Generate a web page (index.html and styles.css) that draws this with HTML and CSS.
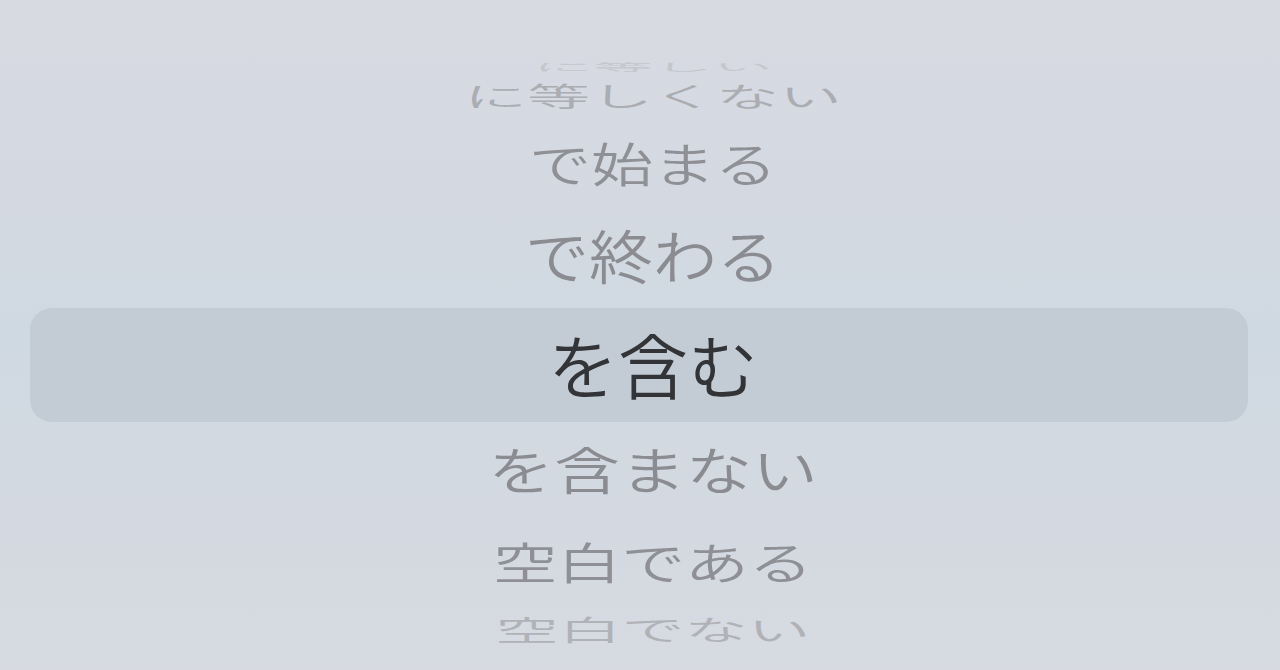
FILE: index.html
```html
<!DOCTYPE html>
<html lang="ja">
<head>
<meta charset="utf-8">
<link rel="stylesheet" href="styles.css">
</head>
<body>
<div class="picker">
  <div class="row r4"><span class="t">に等しい</span></div>
  <div class="row r3"><span class="t">に等しくない</span></div>
  <div class="row r2"><span class="t">で始まる</span></div>
  <div class="row r1"><span class="t">で終わる</span></div>
  <div class="row sel"><span class="t">を含む</span></div>
  <div class="row b1"><span class="t">を含まない</span></div>
  <div class="row b2"><span class="t">空白である</span></div>
  <div class="row b3"><span class="t">空白でない</span></div>
</div>
</body>
</html>
```

FILE: styles.css
```css
html, body {
  margin: 0;
  padding: 0;
}
body {
  width: 1280px;
  height: 670px;
  overflow: hidden;
  background: linear-gradient(to bottom, #d8dae2 0%, #d4d9e1 30%, #cfd9e2 50%, #d3d9e1 72%, #d7dae1 100%);
  font-family: "Noto Sans CJK JP", "Noto Sans", sans-serif;
  font-weight: 350;
}
.picker {
  display: flex;
  flex-direction: column;
  padding-top: 62px;
}
.row {
  display: flex;
  align-items: center;
  justify-content: center;
  padding-left: 26px;
  color: #8b8c91;
  overflow: visible;
}
.t {
  display: inline-block;
  line-height: 1;
  white-space: nowrap;
}
.r4 { height: 12px; }
.r4 .t { font-size: 60px; transform: translateY(-2px) scaleY(0.18); color: #c5c7cd; }
.r3 { height: 48px; }
.r3 .t { font-size: 63px; transform: translateY(-3px) scaleY(0.43); color: #abadb3; }
.r2 { height: 86px; }
.r2 .t { font-size: 62px; transform: translateY(-3px) scaleY(0.75); color: #8f9095; }
.r1 { height: 100px; }
.r1 .t { font-size: 64px; transform: translateY(-4px) scaleY(0.9); }
.sel {
  height: 114px;
  margin: 0 32px 0 30px;
  padding-left: 28px;
  background: #c3ccd5;
  border-radius: 22px;
  color: #333438;
}
.sel .t { font-size: 70px; transform: translateY(-1px); }
.b1 { height: 96px; }
.b1 .t { font-size: 66px; transform: translateY(-3px) scaleY(0.78); }
.b2 { height: 90px; }
.b2 .t { font-size: 64px; transform: translateY(-3px) scaleY(0.7); color: #8f9095; }
.b3 { height: 44px; }
.b3 .t { font-size: 63px; transform: translateY(-2px) scaleY(0.46); color: #b0b2b8; }
```
